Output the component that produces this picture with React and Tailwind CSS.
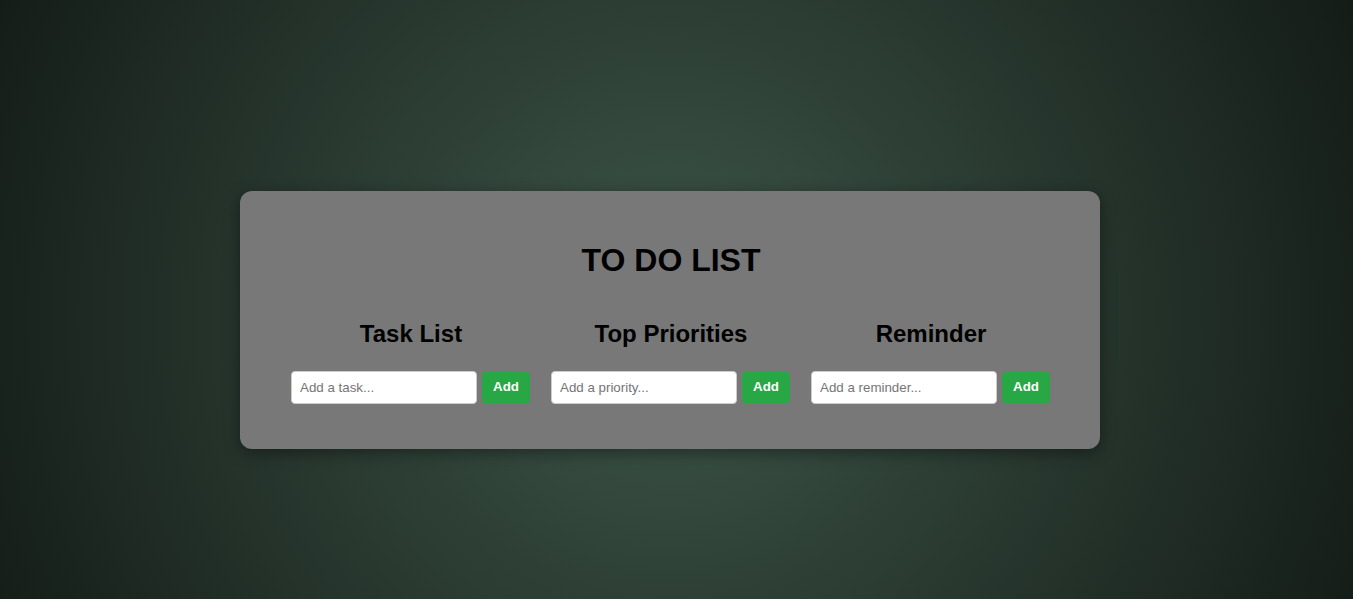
export default function App() {
  const cols = [
    { title: "Task List", ph: "Add a task..." },
    { title: "Top Priorities", ph: "Add a priority..." },
    { title: "Reminder", ph: "Add a reminder..." },
  ];
  return (
    <div className="min-h-screen w-full flex items-center justify-center pt-[40px] pr-[13px] bg-[radial-gradient(circle_at_49.5%_53%,#3e5649_0%,#141c17_100%)] font-['Liberation_Sans',Arial,sans-serif]">
      <div className="w-[860px] rounded-[12px] bg-[#777877] pl-[51px] pr-[49px] pt-[30px] pb-[30px] shadow-[0_4px_16px_rgba(0,0,0,0.4)] text-center">
        <h1 className="text-[32px] leading-[37px] font-bold text-black my-[21px]">TO DO LIST</h1>
        <div className="flex gap-[20px]">
          {cols.map((c) => (
            <div key={c.title} className="w-[240px] flex flex-col">
              <h2 className="text-[24px] leading-[28px] font-bold text-black mt-[20px] mb-[23px]">{c.title}</h2>
              <div className="flex items-center gap-[5px] mb-[15px]">
                <input
                  type="text"
                  placeholder={c.ph}
                  className="w-[186px] h-[33px] bg-white border border-[#cccccc] rounded-[4px] px-[8px] text-[13.333px] text-black placeholder:text-[#757575] outline-none"
                />
                <button className="w-[48px] h-[31px] bg-[#28a745] text-white text-[13.333px] font-bold rounded-[4px]">
                  Add
                </button>
              </div>
            </div>
          ))}
        </div>
      </div>
    </div>
  );
}
